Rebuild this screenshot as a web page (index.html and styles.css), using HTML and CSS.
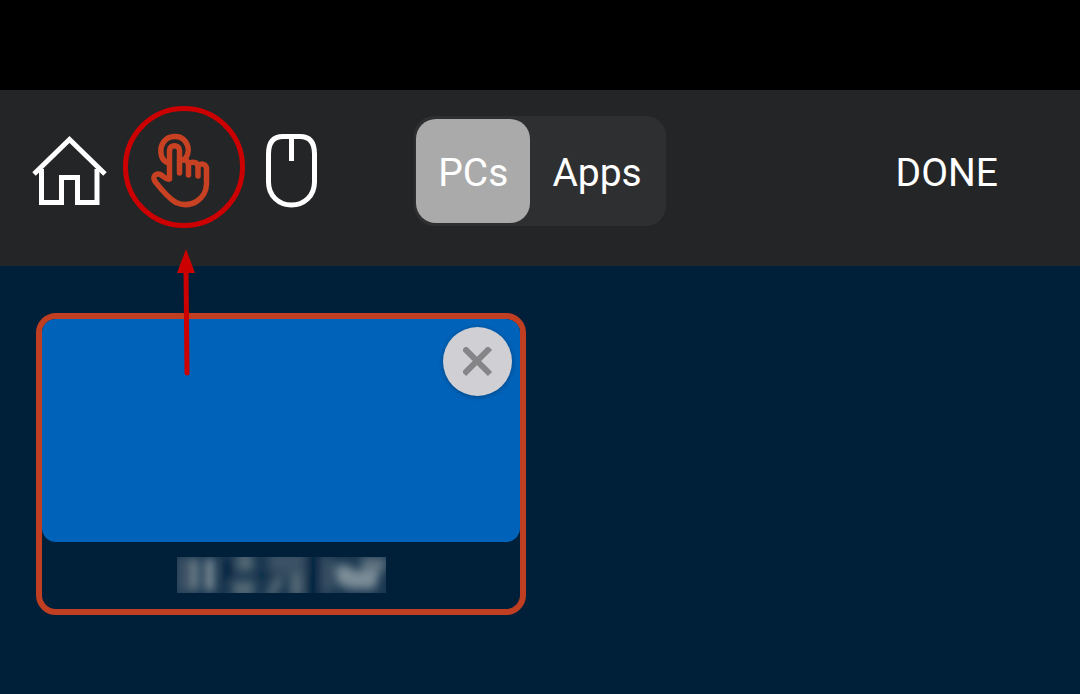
FILE: index.html
```
<!DOCTYPE html>
<html lang="en">
<head>
  <meta charset="UTF-8">
  <meta name="viewport" content="width=device-width, initial-scale=1">
  <title>Remote Desktop</title>
  <link rel="stylesheet" href="styles.css">
</head>
<body>

  <div class="top-space"></div>

  <header class="toolbar">
    <div class="tools">
      <button class="tool" type="button" aria-label="Home">
        <svg viewBox="0 0 76 76" fill="none" stroke="#fff" stroke-width="5">
          <path d="M2 41 L37.500 6.500 L73 41"/>
          <path d="M9.500 36 V69.500 H29.500 V44.500 H45.500 V69.500 H65 V36"/>
        </svg>
      </button>

      <button class="tool tool-touch" type="button" aria-label="Touch mode">
        <svg viewBox="0 0 76 76" fill="none" stroke="#c84122" stroke-width="5.500" stroke-linecap="round" stroke-linejoin="round">
          <path d="M22 29 C16 25 15 15 20 8.500 C25 2 36 2 41 8 C45 13 45.500 20 41 26"/>
          <path d="M25.500 46 V17.500 C25.500 11 35.500 11 35.500 17.500 V40 M35.500 28 C39 26 44.500 26.500 44.500 32 V42 M44.500 31.500 C47.500 28 54 28.500 54 34 V43 M54 33 C57.500 29.500 63 31 62.500 37 V51 C62 66 47 76 32 69.500 C24 65 17 56 11.500 49 C7 43 13 38.500 18 42.500 C20 44 22.500 47 25.500 46"/>
        </svg>
        <svg class="mark-ring" viewBox="0 0 124 124" aria-hidden="true">
          <circle cx="62" cy="62" r="58.500" fill="none" stroke="#c00" stroke-width="5"/>
        </svg>
        <svg class="mark-arrow" viewBox="0 0 20 128" aria-hidden="true">
          <path d="M9 20 L10 124" stroke="#c00" stroke-width="5" stroke-linecap="round"/>
          <path d="M9 0 L18 24 H0 Z" fill="#c00"/>
        </svg>
      </button>

      <button class="tool" type="button" aria-label="Mouse mode">
        <svg viewBox="0 0 76 76" fill="none" stroke="#fff" stroke-width="5">
          <path d="M12.500 21 Q12.500 3.500 27 3.500 H44 Q58.500 3.500 58.500 21 V49 C58.500 63 48 72 35.500 72 C23 72 12.500 63 12.500 49 Z M35.500 4 V28"/>
        </svg>
      </button>
    </div>

    <div class="switch">
      <button class="switch-btn active" type="button" aria-pressed="true">PCs</button>
      <button class="switch-btn" type="button" aria-pressed="false">Apps</button>
    </div>

    <button class="done" type="button">DONE</button>
  </header>

  <main class="sessions">
    <div class="card">
      <div class="preview">
        <button class="close" type="button" aria-label="Close session">
          <svg viewBox="0 0 30 30" fill="none" stroke="#858588" stroke-width="6">
            <path d="M1 1 L27 27 M27 1 L1 27"/>
          </svg>
        </button>
      </div>
      <div class="label">
        <svg class="redacted" viewBox="0 0 209 36" aria-hidden="true">
          <defs>
            <filter id="smear" x="-10%" y="-40%" width="120%" height="180%">
              <feGaussianBlur stdDeviation="4 5"/>
            </filter>
            <clipPath id="box"><rect width="209" height="36"/></clipPath>
          </defs>
          <g clip-path="url(#box)">
            <rect width="209" height="36" fill="#1a3750"/>
            <g filter="url(#smear)">
              <path fill="#3b5165" d="M0 0 H14 V36 H0 Z M92 -6 H128 V18 H92 Z M145 0 H155 V36 H145 Z"/>
              <path fill="#7b8c95" d="M15 2 H21 V33 H15 Z M28 2 H37 V34 H28 Z"/>
              <path fill="#536774" d="M60 -4 H76 V14 H60 Z M56 24 H77 V40 H56 Z M98 20 H108 L98 40 H88 Z M113 18 H126 V40 H113 Z"/>
              <path fill="#7b8d97" d="M158 8 H170 L180 14 H203 L198 32 H174 L160 27 Z"/>
              <path fill="#5b707e" d="M184 0 H209 V14 H184 Z"/>
              <path fill="#03213f" d="M131 -12 H141 V48 H131 Z M79 16 H108 V20 H79 Z M47 4 H55 V22 H47 Z"/>
            </g>
          </g>
        </svg>
      </div>
    </div>
  </main>

</body>
</html>
```
FILE: styles.css
```
* {
  box-sizing: border-box;
}

body {
  margin: 0;
  min-height: 100vh;
  display: flex;
  flex-direction: column;
  background: #001f39;
  color: #fff;
  font-family: Roboto, "Liberation Sans", sans-serif;
}

button {
  padding: 0;
  border: 0;
  background: none;
  color: inherit;
  font: inherit;
  cursor: pointer;
}

svg {
  display: block;
}

.top-space {
  height: 90px;
  background: #000;
}

.toolbar {
  display: grid;
  grid-template-columns: 1fr auto 1fr;
  align-items: center;
  padding: 26px 0 40px;
  background: #242527;
  font-size: 39px;
  line-height: 48px;
}

.tools {
  display: flex;
  gap: 36px;
  padding-left: 32px;
}

.tool {
  width: 76px;
  height: 76px;
}

.tool-touch {
  position: relative;
}

/* red ring and arrow pointing at the touch icon */
.mark-ring {
  position: absolute;
  top: -28px;
  left: -22px;
  width: 124px;
  pointer-events: none;
}

.mark-arrow {
  position: absolute;
  top: 116px;
  left: 33px;
  width: 20px;
  pointer-events: none;
}

.switch {
  display: flex;
  padding: 3px 2px;
  border-radius: 20px;
  background: #2e2f31;
}

.switch-btn {
  height: 104px;
  padding: 4px 22px 0;
  border-radius: 20px;
}

.switch-btn.active {
  background: #aaa;
}

.done {
  justify-self: end;
  margin-right: 82px;
  padding-top: 4px;
}

.sessions {
  display: grid;
  grid-template-columns: 1fr 1fr;
  gap: 28px;
  padding: 47px 36px;
}

.card {
  border: 6px solid #c03f22;
  border-radius: 20px;
}

.preview {
  display: flex;
  justify-content: flex-end;
  align-items: flex-start;
  height: 223px;
  padding: 8px;
  border-radius: 14px;
  background: #0062b8;
}

.close {
  display: flex;
  justify-content: center;
  align-items: center;
  width: 69px;
  height: 69px;
  border-radius: 50%;
  background: #cfcfd4;
  box-shadow: 0 1px 4px rgba(0, 0, 0, 0.3);
}

.close svg {
  width: 30px;
}

.label {
  display: flex;
  justify-content: center;
  padding: 15px 0 16px;
}

.redacted {
  width: 209px;
}
```
